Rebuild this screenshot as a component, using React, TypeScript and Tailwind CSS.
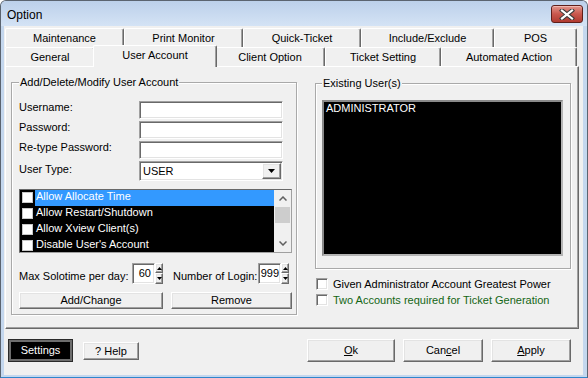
import React from "react";

const raised =
  "bg-[#f0f0f0] border border-t-white border-l-white border-r-[#696969] border-b-[#696969] shadow-[inset_-1px_-1px_0_#a0a0a0,inset_1px_1px_0_#e3e3e3]";
const sunken =
  "bg-white border border-t-[#a0a0a0] border-l-[#a0a0a0] border-r-white border-b-white shadow-[inset_1px_1px_0_#696969,inset_-1px_-1px_0_#e3e3e3]";
const groupBox =
  "border border-[#a9a9a9] shadow-[inset_1px_1px_0_#ffffff,1px_1px_0_#ffffff] flex flex-col";

function Tab({ w, children }: { w: string; children: React.ReactNode }) {
  return (
    <div
      className={`${w} h-[19px] shrink-0 flex items-center justify-center bg-[#f0f0f0] border-t border-l border-r border-t-white border-l-white border-r-[#696969] rounded-t-[2px] shadow-[inset_-1px_0_0_#a0a0a0]`}
    >
      {children}
    </div>
  );
}

function Spin() {
  return (
    <div className="flex flex-col w-[8px] h-[21px]">
      <div className={`${raised} h-[10px] flex items-center justify-center`}>
        <svg width="5" height="3" viewBox="0 0 5 3">
          <polygon points="2.5,0 5,3 0,3" fill="#000" />
        </svg>
      </div>
      <div className={`${raised} h-[11px] flex items-center justify-center`}>
        <svg width="5" height="3" viewBox="0 0 5 3">
          <polygon points="0,0 5,0 2.5,3" fill="#000" />
        </svg>
      </div>
    </div>
  );
}

function ListItem({ label, selected }: { label: string; selected?: boolean }) {
  return (
    <div className="h-[16px] flex items-start shrink-0">
      <span className="ml-[2px] mt-[2px] w-[11px] h-[11px] bg-white border border-[#c8c8c8] shrink-0" />
      <span
        className={`ml-[2px] flex-1 h-[16px] pl-[1px] pt-0 text-white ${selected ? "bg-[#3399ff]" : ""}`}
      >
        {label}
      </span>
    </div>
  );
}

function FormRow({ label, top }: { label: string; top: string }) {
  return (
    <div className={`flex items-start h-[18px] ${top}`}>
      <span className="w-[120px]">{label}</span>
      <div className={`${sunken} w-[144px] h-[18px]`} />
    </div>
  );
}

export default function App() {
  return (
    <div className="w-[588px] h-[378px] flex flex-col bg-[#c4d7ee] border border-[#5b6470] border-b-[#2f86cc] rounded-t-[6px] overflow-hidden font-['Liberation_Sans',Arial,sans-serif] text-[11px] leading-[13px] text-black select-none">
      {/* Title bar */}
      <div className="h-[25px] shrink-0 flex items-start bg-linear-to-b from-[#bcd0ea] to-[#d4e3f5]">
        <span className="ml-[6px] mt-[7px] text-[12px] leading-[14px] text-black">Option</span>
        <div className="ml-auto mr-[4px] mt-[4px] w-[32px] h-[18px] rounded-[3px] border border-[#5e1f1a] bg-linear-to-b from-[#e0958c] via-[#c9574d] to-[#b03a30] shadow-[inset_0_1px_0_#f2b8b0] flex items-center justify-center">
          <svg width="16" height="11" viewBox="0 0 16 11">
            <path d="M3 1.5 L13 9.5 M13 1.5 L3 9.5" stroke="#3a3a3a" strokeWidth="4.2" strokeLinecap="square" />
            <path d="M3 1.5 L13 9.5 M13 1.5 L3 9.5" stroke="#ffffff" strokeWidth="2.2" strokeLinecap="square" />
          </svg>
        </div>
      </div>

      {/* Client */}
      <div className="ml-[3px] mr-[4px] h-[349px] shrink-0 bg-[#f0f0f0] flex flex-col">
        {/* Tabs back row */}
        <div className="flex ml-[1px] mt-[2px]">
          <Tab w="w-[119px]">Maintenance</Tab>
          <Tab w="w-[119px]">Print Monitor</Tab>
          <Tab w="w-[118px]">Quick-Ticket</Tab>
          <Tab w="w-[133px]">Include/Exclude</Tab>
          <Tab w="w-[83px]">POS</Tab>
        </div>
        {/* Tabs front row */}
        <div className="flex ml-[1px] items-start">
          <Tab w="w-[90px]">General</Tab>
          <div className="w-[124px] h-[22px] -mx-[2px] -mt-[2px] -mb-[1px] relative z-10 shrink-0 flex items-center justify-center pb-[3px] bg-[#f0f0f0] border-t border-l border-r border-t-white border-l-white border-r-[#696969] rounded-t-[2px] shadow-[inset_-1px_0_0_#a0a0a0]">
            User Account
          </div>
          <Tab w="w-[110px]">Client Option</Tab>
          <Tab w="w-[116px]">Ticket Setting</Tab>
          <Tab w="w-[136px]">Automated Action</Tab>
        </div>

        {/* Tab panel */}
        <div className="ml-[1px] w-[574px] h-[263px] shrink-0 flex items-start border border-t-white border-l-white border-r-[#696969] border-b-[#696969] shadow-[inset_-1px_-1px_0_#a0a0a0]">
          {/* Left group */}
          <div className={`${groupBox} ml-[5px] mt-[15px] w-[286px] h-[233px] pl-[7px]`}>
            <span className="-mt-[7px] self-start px-[1px] bg-[#f0f0f0]">Add/Delete/Modify User Account</span>
            <FormRow label="Username:" top="mt-[12px]" />
            <FormRow label="Password:" top="mt-[2px]" />
            <FormRow label="Re-type Password:" top="mt-[2px]" />
            <div className="flex items-start h-[20px] mt-[2px]">
              <span className="w-[120px] pt-[2px]">User Type:</span>
              <div className={`${sunken} w-[144px] h-[20px] flex items-center`}>
                <span className="ml-[3px] flex-1 pt-[1px]">USER</span>
                <div className={`${raised} w-[19px] h-[16px] mr-[1px] flex items-center justify-center`}>
                  <svg width="7" height="4" viewBox="0 0 7 4">
                    <polygon points="0,0 7,0 3.5,4" fill="#000" />
                  </svg>
                </div>
              </div>
            </div>

            {/* Check list */}
            <div className="mt-[8px] w-[273px] h-[64px] bg-black border border-t-[#696969] border-l-[#696969] border-r-[#a0a0a0] border-b-[#a0a0a0] flex overflow-hidden">
              <div className="flex-1 flex flex-col overflow-hidden">
                <ListItem label="Allow Allocate Time" selected />
                <ListItem label="Allow Restart/Shutdown" />
                <ListItem label="Allow Xview Client(s)" />
                <ListItem label="Disable User's Account" />
              </div>
              <div className="w-[17px] bg-[#f0f0f0] flex flex-col items-center">
                <div className="h-[17px] flex items-center justify-center">
                  <svg width="8" height="5" viewBox="0 0 8 5">
                    <polyline points="0.5,4.5 4,1 7.5,4.5" fill="none" stroke="#606060" strokeWidth="1.5" />
                  </svg>
                </div>
                <div className="w-[15px] h-[16px] bg-[#cdcdcd]" />
                <div className="flex-1" />
                <div className="h-[17px] flex items-center justify-center">
                  <svg width="8" height="5" viewBox="0 0 8 5">
                    <polyline points="0.5,0.5 4,4 7.5,0.5" fill="none" stroke="#606060" strokeWidth="1.5" />
                  </svg>
                </div>
              </div>
            </div>

            {/* Spin row */}
            <div className="mt-[10px] flex items-start h-[21px]">
              <span className="w-[113px] pt-[7px]">Max Solotime per day:</span>
              <div className={`${sunken} w-[23px] h-[21px] flex items-center justify-end pr-[3px]`}>60</div>
              <Spin />
              <span className="ml-[10px] w-[85px] pt-[7px]">Number of Login:</span>
              <div className={`${sunken} w-[23px] h-[21px] flex items-center justify-end pr-[1px]`}>999</div>
              <Spin />
            </div>

            {/* Buttons */}
            <div className="mt-[8px] flex gap-[8px]">
              <div className={`${raised} w-[144px] h-[17px] flex items-center justify-center`}>Add/Change</div>
              <div className={`${raised} w-[121px] h-[17px] flex items-center justify-center`}>Remove</div>
            </div>
          </div>

          {/* Right column */}
          <div className="ml-[18px] mt-[16px] w-[256px] flex flex-col">
            <div className={`${groupBox} h-[186px] pl-[6px]`}>
              <span className="-mt-[7px] self-start px-[1px] bg-[#f0f0f0]">Existing User(s)</span>
              <div className="mt-[10px] w-[241px] h-[156px] bg-black border-2 border-t-[#8a8a8a] border-l-[#8a8a8a] border-r-[#b4b4b4] border-b-[#b4b4b4] pl-[2px] text-white">
                ADMINISTRATOR
              </div>
            </div>
            <div className="mt-[8px] ml-[1px] flex items-center h-[14px]">
              <span className={`${sunken} w-[12px] h-[12px]`} />
              <span className="ml-[5px]">Given Administrator Account Greatest Power</span>
            </div>
            <div className="mt-[2px] ml-[1px] flex items-center h-[14px]">
              <span className={`${sunken} w-[12px] h-[12px]`} />
              <span className="ml-[5px] text-[#146614]">Two Accounts required for Ticket Generation</span>
            </div>
          </div>
        </div>

        {/* Bottom buttons */}
        <div className="mt-[10px] flex items-start">
          <div className="ml-[5px] mt-[1px] w-[63px] h-[21px] bg-black border-2 border-[#6d6d6d] outline outline-1 outline-[#2a2a2a] flex items-center justify-center text-white">
            Settings
          </div>
          <div className={`${raised} ml-[11px] mt-[3px] w-[56px] h-[18px] flex items-center justify-center`}>? Help</div>
          <div className={`${raised} ml-auto w-[88px] h-[23px] flex items-center justify-center`}>
            <span><span className="underline">O</span>k</span>
          </div>
          <div className={`${raised} ml-[8px] w-[80px] h-[23px] flex items-center justify-center`}>
            <span>Can<span className="underline">c</span>el</span>
          </div>
          <div className={`${raised} ml-[8px] mr-[12px] w-[80px] h-[23px] flex items-center justify-center`}>
            <span><span className="underline">A</span>pply</span>
          </div>
        </div>
      </div>
    </div>
  );
}
